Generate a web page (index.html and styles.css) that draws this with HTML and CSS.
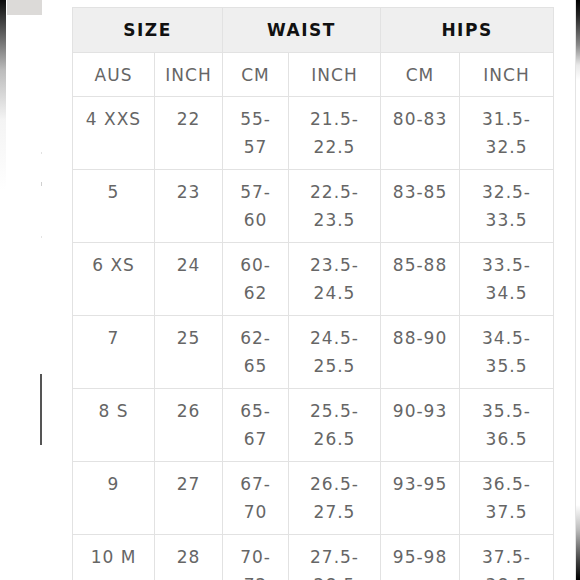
FILE: index.html
```html
<!DOCTYPE html>
<html>
<head>
<meta charset="utf-8">
<link rel="stylesheet" href="styles.css">
</head>
<body>
<div class="page">
  <div class="edge edge-left"></div>
  <div class="gutter-left">
    <div class="swatch"></div>
    <div class="ticks">
      <span class="tick"></span>
      <span class="tick t2"></span>
      <span class="tick t3"></span>
    </div>
    <div class="marker"></div>
  </div>
  <div class="table-wrap">
    <table class="chart">
      <colgroup>
        <col class="c1"><col class="c2"><col class="c3"><col class="c4"><col class="c5"><col class="c6">
      </colgroup>
      <thead>
        <tr class="group">
          <th colspan="2">SIZE</th>
          <th colspan="2">WAIST</th>
          <th colspan="2">HIPS</th>
        </tr>
        <tr class="units">
          <td>AUS</td><td>INCH</td><td>CM</td><td>INCH</td><td>CM</td><td>INCH</td>
        </tr>
      </thead>
      <tbody>
        <tr><td>4 XXS</td><td>22</td><td>55-<br>57</td><td>21.5-<br>22.5</td><td>80-83</td><td>31.5-<br>32.5</td></tr>
        <tr><td>5</td><td>23</td><td>57-<br>60</td><td>22.5-<br>23.5</td><td>83-85</td><td>32.5-<br>33.5</td></tr>
        <tr><td>6 XS</td><td>24</td><td>60-<br>62</td><td>23.5-<br>24.5</td><td>85-88</td><td>33.5-<br>34.5</td></tr>
        <tr><td>7</td><td>25</td><td>62-<br>65</td><td>24.5-<br>25.5</td><td>88-90</td><td>34.5-<br>35.5</td></tr>
        <tr><td>8 S</td><td>26</td><td>65-<br>67</td><td>25.5-<br>26.5</td><td>90-93</td><td>35.5-<br>36.5</td></tr>
        <tr><td>9</td><td>27</td><td>67-<br>70</td><td>26.5-<br>27.5</td><td>93-95</td><td>36.5-<br>37.5</td></tr>
        <tr><td>10 M</td><td>28</td><td>70-<br>72</td><td>27.5-<br>28.5</td><td>95-98</td><td>37.5-<br>38.5</td></tr>
      </tbody>
    </table>
  </div>
  <div class="gutter-right"></div>
  <div class="edge edge-right"></div>
</div>
</body>
</html>
```
FILE: styles.css
```css
* { box-sizing: border-box; }
html, body { margin: 0; padding: 0; background: #fff; }
.page {
  display: flex;
  width: 580px;
  height: 580px;
  overflow: hidden;
  font-family: "DejaVu Sans", "Noto Sans", sans-serif;
}
.edge { flex: 0 0 6px; height: 580px; }
.edge-left {
  background: linear-gradient(to bottom, #0c0c0c 0px, #555 30px, #bbb 70px, #f4f4f4 120px, #fafafa 160px, #fff 190px);
}
.edge-right {
  border-left: 1px solid #e4e4e4;
  background: linear-gradient(to bottom, #000 0px, #222 15px, #888 45px, #e8e8e8 65px, #fff 80px, #fff 505px, #bbb 530px, #444 560px, #000 580px);
}
.gutter-left {
  flex: 0 0 66px;
  display: flex;
  flex-direction: column;
}
.swatch {
  width: 35px;
  height: 15px;
  margin-left: 1px;
  background: #dcdad8;
}
.ticks {
  display: flex;
  flex-direction: column;
  margin-left: 35px;
  margin-top: 137px;
}
.tick { width: 1px; height: 2px; background: #e2e2e2; }
.tick.t2 { margin-top: 28px; height: 4px; background: #d0d0d0; }
.tick.t3 { margin-top: 50px; background: #e4e4e4; }
.marker {
  width: 2px;
  height: 71px;
  margin-left: 34px;
  margin-top: 136px;
  background: #555;
}
.table-wrap {
  flex: 0 0 481px;
  padding-top: 7px;
}
.gutter-right { flex: 0 0 21px; }
.chart {
  width: 481px;
  border-collapse: collapse;
  table-layout: fixed;
  color: #666;
  font-size: 17px;
  letter-spacing: 1px;
}
.c1 { width: 82px; }
.c2 { width: 68px; }
.c3 { width: 66px; }
.c4 { width: 92px; }
.c5 { width: 79px; }
.c6 { width: 94px; }
.chart th, .chart td {
  border: 1px solid #e2e2e2;
  text-align: center;
  vertical-align: top;
  padding: 0;
  font-weight: normal;
}
.chart tr.group th {
  background: #efefef;
  color: #111;
  font-weight: bold;
  height: 45px;
  vertical-align: middle;
  letter-spacing: 1.5px;
}
.chart tr.units td {
  height: 44px;
  vertical-align: middle;
}
.chart tbody td {
  height: 73px;
  line-height: 28px;
  padding-top: 8px;
}
```
